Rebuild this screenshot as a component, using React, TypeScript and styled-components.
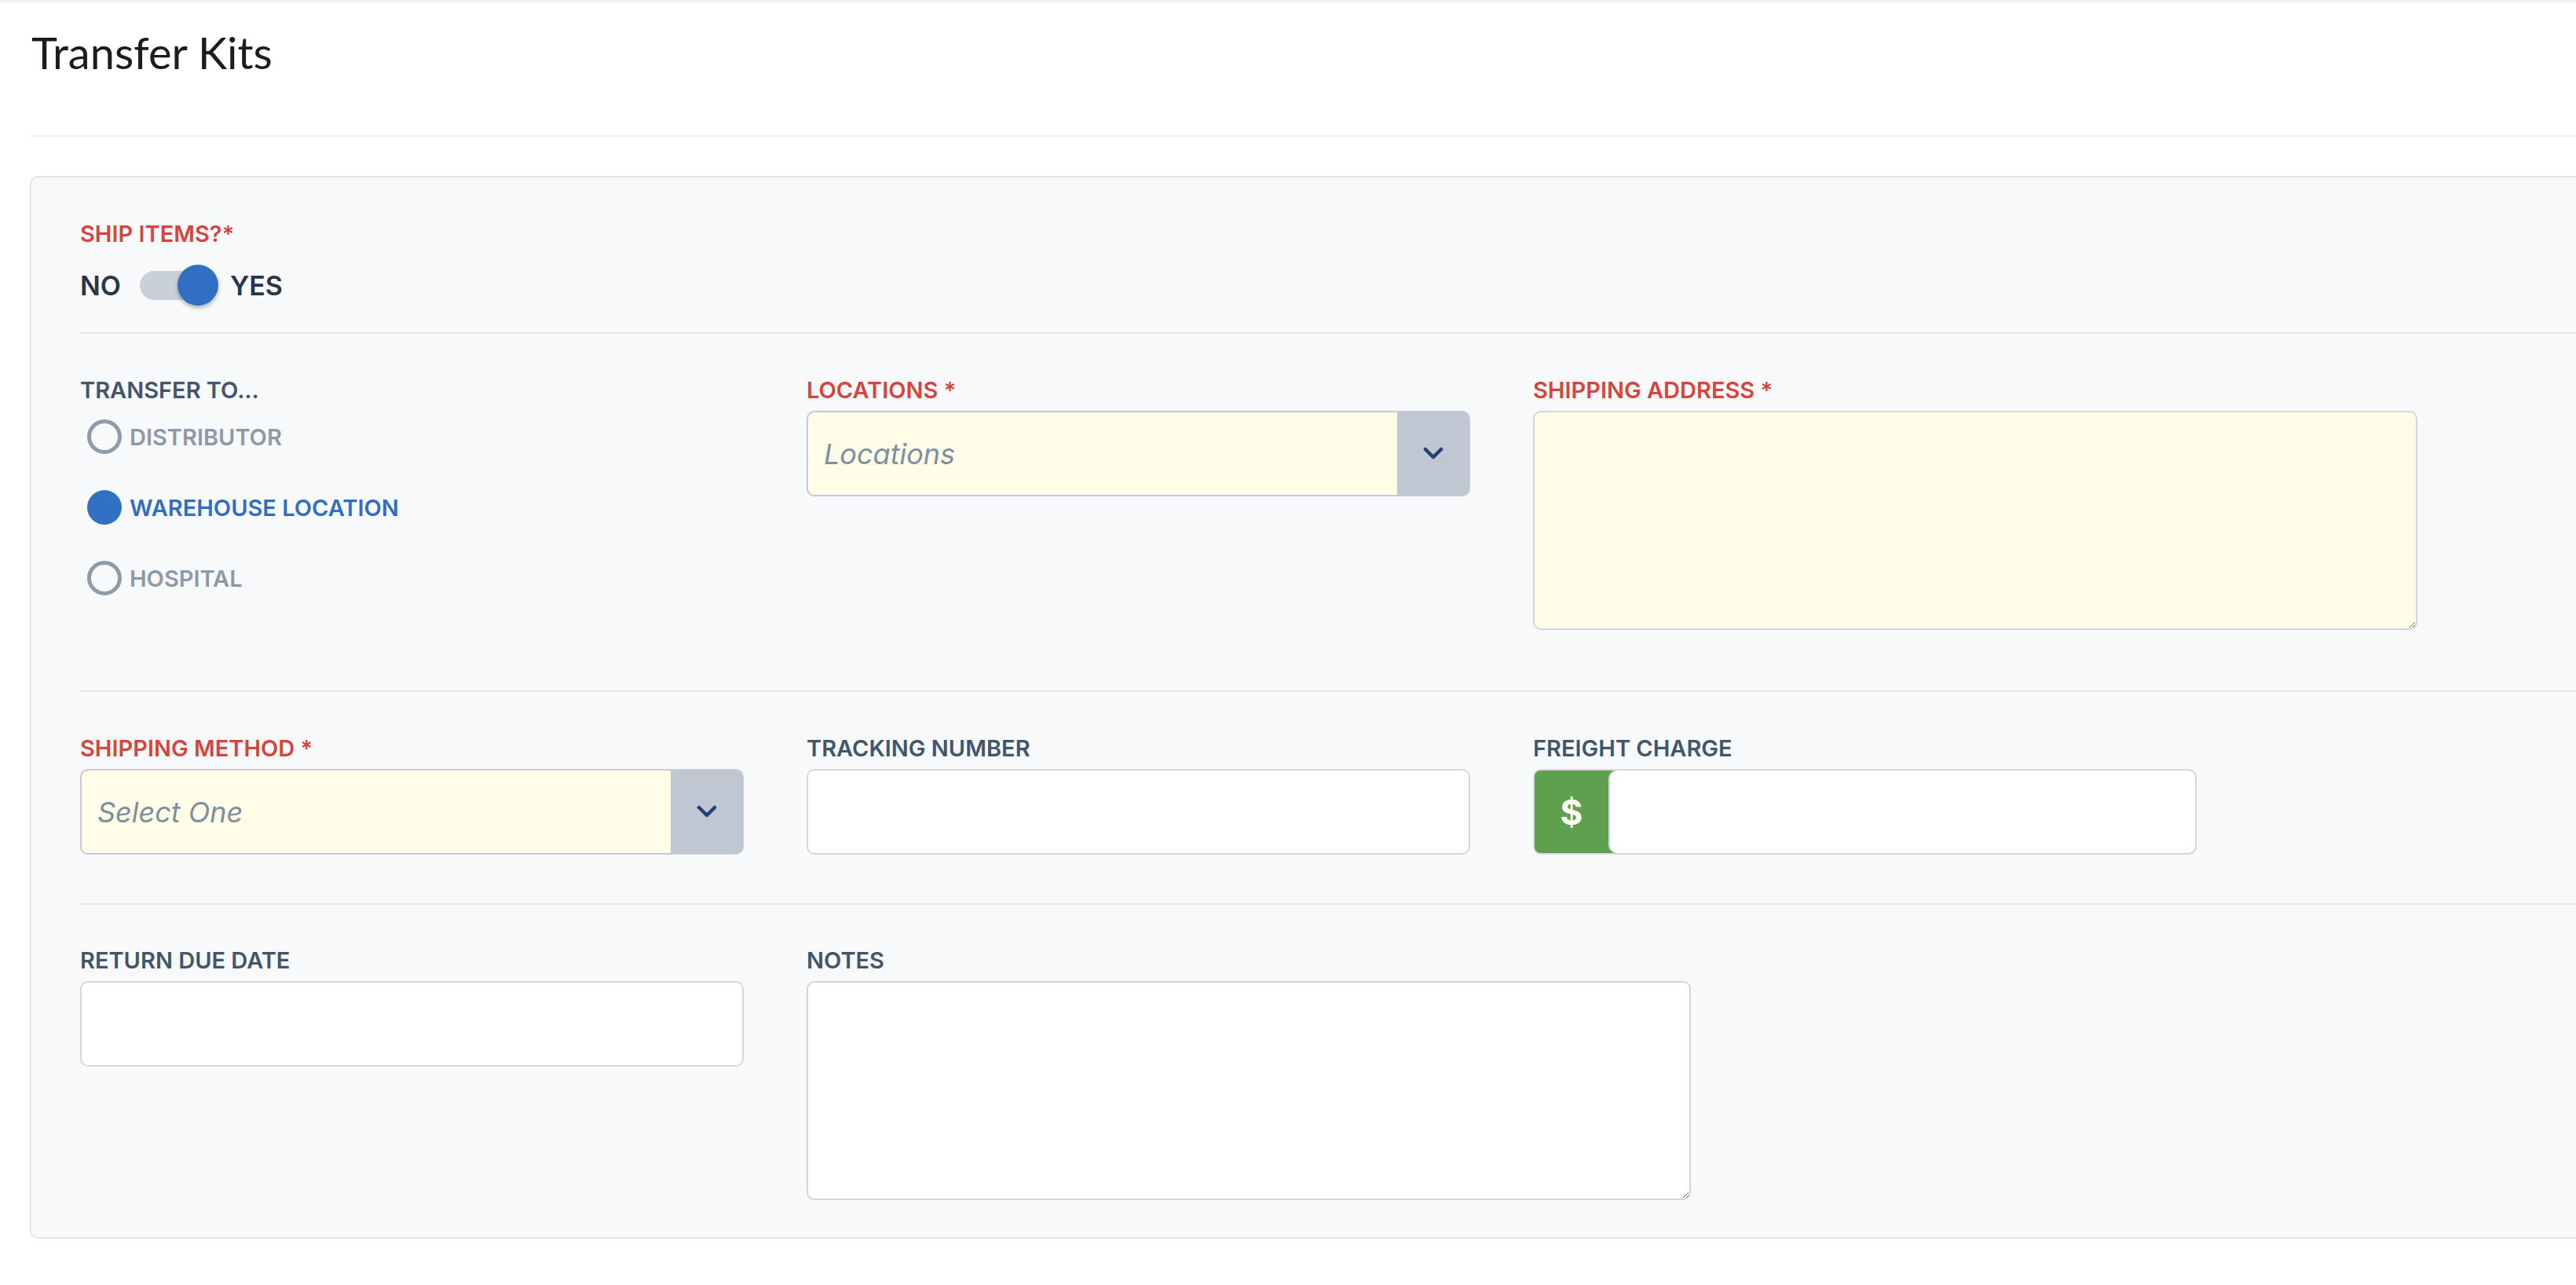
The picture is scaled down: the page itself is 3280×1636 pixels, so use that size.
import styled, { createGlobalStyle } from 'styled-components';

const GlobalStyle = createGlobalStyle`
  html, body {
    margin: 0;
    padding: 0;
    background: #ffffff;
    overflow: hidden;
  }
  body {
    font-family: Inter, "Noto Sans", sans-serif;
  }
  * {
    box-sizing: border-box;
  }
`;

const Page = styled.div`
  border-top: 3px solid #f0f0f2;
  padding-left: 38px;
`;

const Header = styled.div`
  padding: 30px 0 72px 2px;
  border-bottom: 2px solid #efeff3;
`;

const Title = styled.h1`
  margin: 0;
  font-family: Lato, "Liberation Sans", sans-serif;
  font-weight: 400;
  font-size: 56px;
  line-height: 67px;
  color: #1c1c1c;
`;

const Card = styled.div`
  margin-top: 50px;
  margin-right: -40px;
  background: #f8f9fb;
  border: 2px solid #e3e5e9;
  border-radius: 10px;
  padding: 0 0 0 62px;
`;

const Section = styled.div<{ $pt?: number; $pb: number; $first?: boolean }>`
  padding-top: ${({ $pt }) => $pt ?? 54}px;
  padding-bottom: ${({ $pb }) => $pb}px;
  border-top: ${({ $first }) => ($first ? 'none' : '2px solid #e3e6ea')};
`;

const Grid = styled.div`
  display: grid;
  grid-template-columns: repeat(3, 845px);
  column-gap: 80px;
  align-items: start;
`;

const Field = styled.div`
  display: flex;
  flex-direction: column;
`;

const Label = styled.label<{ $required?: boolean }>`
  display: block;
  font-size: 29px;
  line-height: 35px;
  font-weight: 600;
  text-transform: uppercase;
  color: ${({ $required }) => ($required ? '#d4463d' : '#42556a')};
  margin-bottom: 9px;
`;

const ToggleRow = styled.div`
  display: flex;
  align-items: center;
  margin-top: 22px;
  height: 52px;
`;

const ToggleText = styled.span`
  font-size: 34px;
  line-height: 41px;
  font-weight: 600;
  color: #28354b;
`;

const Switch = styled.div`
  position: relative;
  width: 100px;
  height: 52px;
  margin: 0 15px 0 24px;
  display: flex;
  align-items: center;
`;

const Track = styled.div`
  width: 88px;
  height: 37px;
  border-radius: 19px;
  background: #c8d0d8;
`;

const Knob = styled.div`
  position: absolute;
  left: 48px;
  top: 0;
  width: 52px;
  height: 52px;
  border-radius: 50%;
  background: #316fc2;
  box-shadow: 0 3px 5px rgba(0, 0, 0, 0.28);
`;

const RadioList = styled.div`
  display: flex;
  flex-direction: column;
  gap: 46px;
  margin-top: 11px;
  padding-left: 9px;
`;

const RadioOption = styled.div<{ $checked?: boolean }>`
  display: flex;
  align-items: center;
  gap: 10px;
  font-size: 29px;
  line-height: 35px;
  font-weight: 600;
  color: ${({ $checked }) => ($checked ? '#316ec2' : '#8c99aa')};
`;

const RadioCircle = styled.span<{ $checked?: boolean }>`
  width: 44px;
  height: 44px;
  border-radius: 50%;
  flex-shrink: 0;
  background: ${({ $checked }) => ($checked ? '#3270c3' : 'transparent')};
  border: ${({ $checked }) => ($checked ? 'none' : '5px solid #8e9bab')};
`;

const SelectBox = styled.div`
  display: flex;
  height: 109px;
  border: 2px solid #c3cad4;
  border-radius: 10px;
  overflow: hidden;
  background: #fffce8;
  box-shadow: inset 0 -2px 0 #ffffff;
`;

const SelectValue = styled.div`
  flex: 1;
  display: flex;
  align-items: center;
  padding-left: 20px;
  font-size: 36px;
  font-style: italic;
  color: #7f8ea0;
`;

const SelectButton = styled.div`
  width: 91px;
  background: #bfc7d2;
  display: flex;
  align-items: center;
  justify-content: center;
`;

const TextInput = styled.input`
  display: block;
  width: 100%;
  height: 109px;
  border: 2px solid #d4d8dd;
  border-radius: 10px;
  background: #ffffff;
  font-size: 34px;
  padding: 0 20px;
  font-family: inherit;
  outline: none;
`;

const TextArea = styled.textarea<{ $highlight?: boolean }>`
  display: block;
  width: 1126px;
  height: 279px;
  border: 2px solid #d2d6db;
  border-radius: 10px;
  background: ${({ $highlight }) => ($highlight ? '#fffce8' : '#ffffff')};
  font-family: inherit;
  font-size: 32px;
  padding: 16px 20px;
  outline: none;
`;

const InputGroup = styled.div`
  display: flex;
  height: 109px;
  border: 2px solid #d4d8dd;
  border-radius: 10px;
  overflow: hidden;
  background: #5fa04f;
`;

const Addon = styled.div`
  width: 94px;
  display: flex;
  align-items: center;
  justify-content: center;
  font-size: 44px;
  font-weight: 700;
  color: #ffffff;
  background: #5fa04f;
`;

const GroupInput = styled.input`
  flex: 1;
  border: none;
  border-left: 2px solid #d4d8dd;
  border-radius: 10px 0 0 10px;
  background: #ffffff;
  font-family: inherit;
  font-size: 34px;
  padding: 0 20px;
  outline: none;
`;

const Chevron = () => (
  <svg width="26" height="17" viewBox="0 0 26 17" fill="none">
    <path d="M3 3 L13 13 L23 3" stroke="#253f70" strokeWidth="4.5" strokeLinecap="round" strokeLinejoin="round" />
  </svg>
);

const Select = ({ placeholder }: { placeholder: string }) => (
  <SelectBox>
    <SelectValue>{placeholder}</SelectValue>
    <SelectButton>
      <Chevron />
    </SelectButton>
  </SelectBox>
);

const App = () => {
  const options = ['Distributor', 'Warehouse Location', 'Hospital'];
  const selected = 'Warehouse Location';

  return (
    <Page>
      <GlobalStyle />
      <Header>
        <Title>Transfer Kits</Title>
      </Header>

      <Card>
        <Section $first $pb={34}>
          <Label $required>Ship Items?*</Label>
          <ToggleRow>
            <ToggleText>NO</ToggleText>
            <Switch>
              <Track />
              <Knob />
            </Switch>
            <ToggleText>YES</ToggleText>
          </ToggleRow>
        </Section>

        <Section $pb={77}>
          <Grid>
            <Field>
              <Label>Transfer To...</Label>
              <RadioList>
                {options.map((opt) => (
                  <RadioOption key={opt} $checked={opt === selected}>
                    <RadioCircle $checked={opt === selected} />
                    {opt.toUpperCase()}
                  </RadioOption>
                ))}
              </RadioList>
            </Field>
            <Field>
              <Label $required>Locations *</Label>
              <Select placeholder="Locations" />
            </Field>
            <Field>
              <Label $required>Shipping Address *</Label>
              <TextArea $highlight />
            </Field>
          </Grid>
        </Section>

        <Section $pb={62}>
          <Grid>
            <Field>
              <Label $required>Shipping Method *</Label>
              <Select placeholder="Select One" />
            </Field>
            <Field>
              <Label>Tracking Number</Label>
              <TextInput />
            </Field>
            <Field>
              <Label>Freight Charge</Label>
              <InputGroup>
                <Addon>$</Addon>
                <GroupInput />
              </InputGroup>
            </Field>
          </Grid>
        </Section>

        <Section $pt={53} $pb={47}>
          <Grid>
            <Field>
              <Label>Return Due Date</Label>
              <TextInput />
            </Field>
            <Field>
              <Label>Notes</Label>
              <TextArea />
            </Field>
          </Grid>
        </Section>
      </Card>
    </Page>
  );
};

export default App;
